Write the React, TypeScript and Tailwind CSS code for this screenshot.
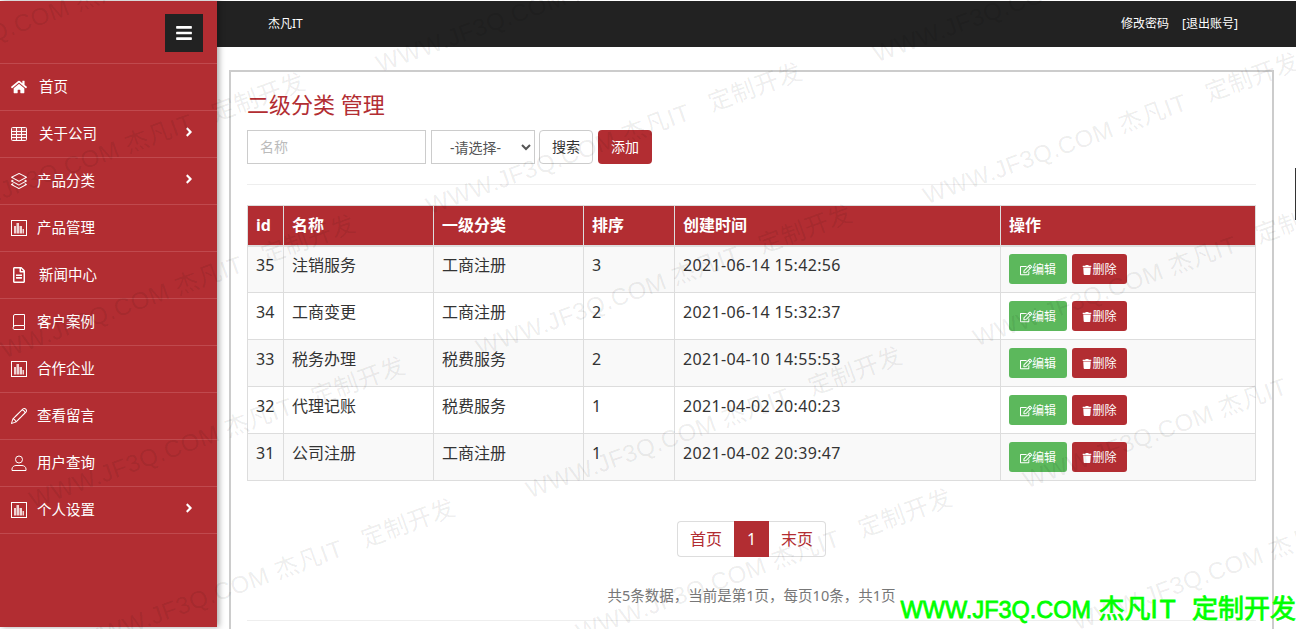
import React from 'react';
import { FaHome, FaBars, FaAngleRight, FaRegEdit, FaTrash, FaRegFileAlt } from 'react-icons/fa';
import { SlLayers, SlPencil } from 'react-icons/sl';

const font = 'font-["Noto_Sans","Noto_Sans_CJK_SC",sans-serif]';

function StatsIcon() {
  return (
    <svg viewBox="0 0 16 16" className="w-4 h-4" fill="none">
      <rect x="0.5" y="0.5" width="15" height="15" stroke="currentColor" />
      <rect x="3" y="6" width="2" height="7.5" fill="currentColor" opacity="0.8" />
      <rect x="5.5" y="3" width="2.5" height="10.5" fill="currentColor" opacity="0.8" />
      <rect x="8.5" y="6" width="2.5" height="7.5" fill="currentColor" opacity="0.8" />
      <rect x="11.5" y="9" width="1.5" height="4.5" fill="currentColor" opacity="0.8" />
    </svg>
  );
}

function TableIcon() {
  return (
    <svg viewBox="0 0 16 14" className="w-4 h-[14px]" fill="none">
      <rect x="0.5" y="0.5" width="15" height="13" rx="1" fill="currentColor" fillOpacity="0.15" stroke="currentColor" />
      <path d="M0.5 4.5h15M0.5 7.5h15M0.5 10.5h15M5.5 .5v13M10.5 .5v13" stroke="currentColor" />
    </svg>
  );
}

function BookIcon() {
  return (
    <svg viewBox="0 0 16 16" className="w-4 h-4" fill="none" stroke="currentColor">
      <path d="M2.5 13V2a1.5 1.5 0 0 1 1.5-1.5h9.5v11H4A1.5 1.5 0 0 0 2.5 13 1.5 1.5 0 0 0 4 15.5h9.5V11.5" />
    </svg>
  );
}

function UserIcon() {
  return (
    <svg viewBox="0 0 16 16" className="w-4 h-4" fill="none" stroke="currentColor">
      <circle cx="8" cy="4.5" r="3.5" />
      <path d="M1 15.5v-1.5c0-2 2-3.5 4-3.5h6c2 0 4 1.5 4 3.5v1.5z" />
    </svg>
  );
}

const menu = [
  { label: '首页', icon: <FaHome className="w-4 h-4" />, gap: 'ml-[12px]' },
  { label: '关于公司', icon: <TableIcon />, arrow: true, gap: 'ml-[12px]' },
  { label: '产品分类', icon: <SlLayers className="w-4 h-4" />, arrow: true, gap: 'ml-[10px]' },
  { label: '产品管理', icon: <StatsIcon />, gap: 'ml-[10px]' },
  { label: '新闻中心', icon: <FaRegFileAlt className="w-4 h-4" />, gap: 'ml-[12px]' },
  { label: '客户案例', icon: <BookIcon />, gap: 'ml-[10px]' },
  { label: '合作企业', icon: <StatsIcon />, gap: 'ml-[10px]' },
  { label: '查看留言', icon: <SlPencil className="w-4 h-4" />, gap: 'ml-[10px]' },
  { label: '用户查询', icon: <UserIcon />, gap: 'ml-[10px]' },
  { label: '个人设置', icon: <StatsIcon />, arrow: true, gap: 'ml-[10px]' },
];

const rows = [
  ['35', '注销服务', '工商注册', '3', '2021-06-14 15:42:56'],
  ['34', '工商变更', '工商注册', '2', '2021-06-14 15:32:37'],
  ['33', '税务办理', '税费服务', '2', '2021-04-10 14:55:53'],
  ['32', '代理记账', '税费服务', '1', '2021-04-02 20:40:23'],
  ['31', '公司注册', '工商注册', '1', '2021-04-02 20:39:47'],
];

// watermark repeats: x/y is the left end of the text
const marks: number[][] = [];
for (let c = -2; c < 3; c++) {
  for (let r = -2; r < 5; r++) {
    marks.push([427 + c * 497 + (r - 1) * 50, 195 + c * -10 + (r - 1) * 142]);
  }
}

export default function App() {
  return (
    <div className={`${font} relative h-[629px] w-[1296px] overflow-hidden bg-white pt-px`}>
      <div className="flex h-[626px]">
        <aside className="w-[217px] shrink-0 bg-[#b22d32] text-white shadow-[2px_0_6px_rgba(0,0,0,0.35)] z-10">
          <div className="flex h-[62px] justify-end items-start pt-[13px] pr-[14px]">
            <div className="flex h-[38px] w-[38px] items-center justify-center bg-[#222]">
              <FaBars className="h-[18px] w-[18px]" />
            </div>
          </div>
          <div className="border-t border-[#c0494e]">
            {menu.map((m) => (
              <div key={m.label} className="flex h-[47px] items-center border-b border-[#c0494e] pl-[11px] pr-[21px] text-[14.5px]">
                <span className="flex w-4 justify-center">{m.icon}</span>
                <span className={m.gap}>{m.label}</span>
                {m.arrow && <FaAngleRight className="ml-auto h-[14px] w-[14px] -mt-1" />}
              </div>
            ))}
          </div>
        </aside>
        <main className="flex-1 min-w-0">
          <header className="flex h-[46px] items-center justify-between bg-[#222] pl-[51px] pr-[58px] text-xs text-white">
            <span>杰凡IT</span>
            <div className="flex gap-[13px]">
              <span>修改密码</span>
              <span>[退出账号]</span>
            </div>
          </header>
          <section className="ml-3 mr-[22px] mt-[23px] h-[600px] border-2 border-[#ccc] border-b-0 px-4 pt-[17px]">
            <h1 className="text-[22px] leading-[30px] text-[#b22d32]">二级分类 管理</h1>
            <div className="mt-[11px] flex h-[34px] items-center">
              <div className="flex h-[34px] w-[179px] items-center border border-[#ccc] pl-3 text-sm text-[#bbb]">名称</div>
              <select className="ml-[5px] h-[34px] w-[104px] border border-[#ccc] bg-white pl-[14px] text-sm text-[#555]">
                <option>-请选择-</option>
              </select>
              <button className="ml-1 h-[34px] w-[54px] rounded border border-[#ccc] text-sm text-[#333]">搜索</button>
              <button className="ml-[5px] h-[34px] w-[54px] rounded bg-[#b22d32] text-sm text-white">添加</button>
            </div>
            <div className="mt-[20px] border-t border-[#eee]" />
            <table className="mt-5 w-[1008px] table-fixed border-collapse text-base text-[#333]">
              <colgroup>
                <col className="w-9" />
                <col className="w-[150px]" />
                <col className="w-[150px]" />
                <col className="w-[91px]" />
                <col className="w-[326px]" />
                <col className="w-[255px]" />
              </colgroup>
              <thead>
                <tr className="h-[40px] bg-[#b22d32] text-left text-white">
                  {['id', '名称', '一级分类', '排序', '创建时间', '操作'].map((h) => (
                    <th key={h} className="border border-[#ddd] border-b-2 px-2 font-bold">{h}</th>
                  ))}
                </tr>
              </thead>
              <tbody>
                {rows.map((r, i) => (
                  <tr key={r[0]} className={`h-[47px] ${i % 2 === 0 ? 'bg-[#f9f9f9]' : 'bg-white'}`}>
                    {r.map((v, j) => (
                      <td key={j} className={`border border-[#ddd] px-2 pb-2 ${j === 4 ? 'tracking-[0.35px]' : ''}`}>{v}</td>
                    ))}
                    <td className="border border-[#ddd] pl-2">
                      <div className="flex gap-[5px]">
                        <button className="flex h-[30px] w-[58px] items-center justify-center rounded-[3px] bg-[#5cb85c] pt-px text-xs text-white">
                          <FaRegEdit className="h-3 w-3" />编辑
                        </button>
                        <button className="flex h-[30px] w-[55px] items-center justify-center rounded-[3px] bg-[#b22d32] pt-px text-xs text-white">
                          <FaTrash className="h-[10px] w-[10px]" />删除
                        </button>
                      </div>
                    </td>
                  </tr>
                ))}
              </tbody>
            </table>
            <div className="mt-10 flex justify-center">
              <div className="flex h-9 items-stretch text-base">
                <span className="flex w-[57px] items-center justify-center rounded-l border border-r-0 border-[#ddd] text-[#b22d32]">首页</span>
                <span className="flex w-[35px] items-center justify-center bg-[#b22d32] text-white">1</span>
                <span className="flex w-[57px] items-center justify-center rounded-r border border-l-0 border-[#ddd] text-[#b22d32]">末页</span>
              </div>
            </div>
            <p className="mt-[28px] text-center text-[14.5px] leading-5 text-[#777]">共5条数据，当前是第1页，每页10条，共1页</p>
            <div className="mt-[15px] border-t border-[#eee]" />
          </section>
        </main>
      </div>

      <div className="pointer-events-none absolute inset-0 z-20 overflow-hidden">
        {marks.map(([x, y]) => (
          <span
            key={`${x}-${y}`}
            className="absolute origin-left -rotate-[20deg] whitespace-pre font-['Liberation_Sans','Noto_Sans_CJK_SC',sans-serif] text-2xl leading-none tracking-[0.5px] text-black/8"
            style={{ left: x, top: y }}
          >
            WWW.JF3Q.COM 杰凡IT   定制开发
          </span>
        ))}
      </div>

      <div className="absolute right-0 top-[168px] h-[52px] w-px bg-[#333] z-30" />
      <div className="absolute bottom-[4px] right-0 z-30 whitespace-pre font-['Liberation_Sans','Noto_Sans_CJK_SC',sans-serif] text-[26px] leading-[30px] text-[#00ff00] [-webkit-text-stroke:0.8px_#00ff00]">
        <span className="text-[23.5px]">WWW.JF3Q.COM</span> 杰凡<span className="tracking-[2px]">IT</span>  定制开发
      </div>
    </div>
  );
}
